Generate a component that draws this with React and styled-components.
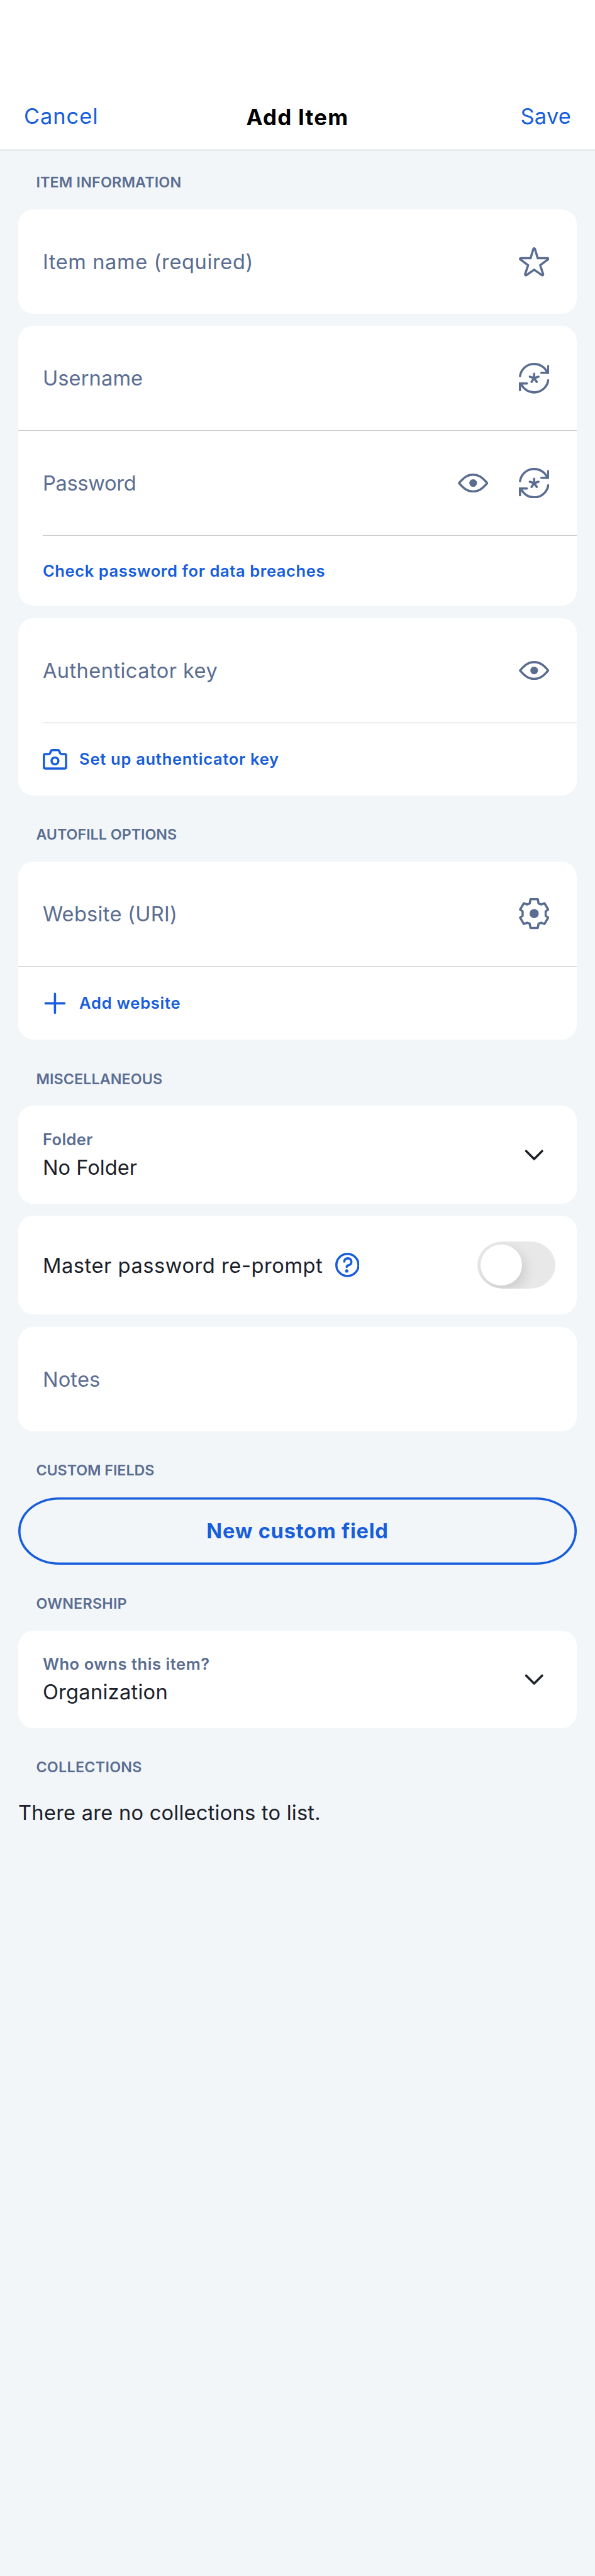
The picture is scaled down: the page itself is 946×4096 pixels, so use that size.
import React from 'react';
import styled, { createGlobalStyle, css } from 'styled-components';

// Sizes are given in device pixels of a 1170x5064 phone canvas and scaled to the page:
// u for widths, type and icons, v for the heights of stacked blocks.
const u = (n) => `${(n * 946) / 1170}px`;
const v = (n) => `${(n * 4096) / 5064}px`;

const color = {
  page: '#f2f6f9',
  card: '#ffffff',
  text: '#1b2029',
  muted: '#5a6d91',
  link: '#175ddc',
  divider: '#cdcdcf',
  bar: '#b1b3b6',
  track: '#e8e8e8',
};

const GlobalStyle = createGlobalStyle`
  html, body { margin: 0; padding: 0; background: ${color.page}; }
  *, *::before, *::after { box-sizing: border-box; }
  button { font: inherit; color: inherit; background: none; border: 0; padding: 0; margin: 0; }
`;

const Screen = styled.div`
  width: 946px;
  height: 4096px;
  overflow: hidden;
  background: ${color.page};
  font-family: Inter, 'Liberation Sans', sans-serif;
  color: ${color.text};
`;

const Header = styled.header`
  height: ${v(295)};
  padding: ${v(165)} ${u(47)} 0;
  background: ${color.card};
  border-bottom: 1px solid ${color.bar};
`;

const HeaderRow = styled.div`
  height: ${v(129)};
  display: grid;
  grid-template-columns: 1fr auto 1fr;
  align-items: center;
`;

const HeaderAction = styled.button`
  justify-self: ${(p) => (p.$end ? 'end' : 'start')};
  padding-bottom: ${u(2)};
  font-size: 34.4px;
  line-height: 44px;
  letter-spacing: ${(p) => p.$track || 0}px;
  color: ${color.link};
`;

const Title = styled.h1`
  margin: 0;
  font-size: 34.9px;
  line-height: 44px;
  font-weight: 700;
  letter-spacing: 1.25px;
  color: #000;
`;

const Form = styled.main`
  padding: 0 ${u(36)};
`;

const SectionTitle = styled.h2`
  margin: 0;
  height: ${(p) => (p.$first ? v(117) : v(130))};
  padding: 0 ${u(35)} ${v(38)};
  display: flex;
  align-items: flex-end;
  font-size: 23.3px;
  line-height: ${u(31)};
  font-weight: 600;
  letter-spacing: ${(p) => p.$track || 0}px;
  color: ${color.muted};
`;

const Stack = styled.div`
  display: flex;
  flex-direction: column;
  gap: ${v(24)};
`;

const Card = styled.section`
  height: ${(p) => v(p.$h)};
  display: flex;
  flex-direction: column;
  overflow: hidden;
  border-radius: ${u(30)};
  background: ${color.card};
`;

const Row = styled.div`
  flex: ${(p) => (p.$fill ? '1 1 0' : `0 0 ${v(205)}`)};
  display: flex;
  align-items: center;
  padding: 0 ${(p) => u(p.$right || 54)} 0 ${u(48)};
`;

const Divider = styled.div`
  flex: 0 0 1px;
  margin-left: ${(p) => (p.$inset ? u(48) : 0)};
  background: ${color.divider};
`;

const bodyText = css`
  font-size: 32.6px;
  line-height: 44px;
  font-weight: 400;
  letter-spacing: ${(p) => p.$track || 0}px;
`;

const Placeholder = styled.span`
  ${bodyText}
  flex: 1;
  color: ${color.muted};
`;

const Value = styled.span`
  ${bodyText}
`;

const Label = styled.span`
  font-size: 25.5px;
  line-height: 44px;
  font-weight: 600;
  letter-spacing: ${(p) => p.$track || 0}px;
  color: ${color.muted};
`;

const Field = styled.div`
  flex: 1;
  display: flex;
  flex-direction: column;
  padding-bottom: ${u(6)};
`;

const LinkButton = styled.button`
  display: flex;
  align-items: center;
  gap: ${u(24)};
  font-size: 25.5px;
  line-height: 44px;
  font-weight: 600;
  letter-spacing: ${(p) => p.$track || 0}px;
  color: ${color.link};
`;

const Actions = styled.div`
  display: flex;
  align-items: center;
  gap: ${u(60)};
  color: ${color.muted};
`;

const PromptLabel = styled.div`
  flex: 1;
  display: flex;
  align-items: center;
  gap: ${u(24)};
`;

const Switch = styled.div`
  width: ${u(153)};
  height: ${u(93)};
  padding: ${u(6)};
  display: flex;
  overflow: hidden;
  border-radius: ${u(50)} / ${u(46.5)};
  background: ${color.track};
`;

const Thumb = styled.div`
  width: ${u(81)};
  height: ${u(81)};
  border-radius: 50%;
  background: #fff;
  box-shadow: ${u(6)} ${u(9)} ${u(24)} rgba(0, 0, 0, 0.13);
`;

const OutlineButton = styled.button`
  width: 100%;
  height: ${v(131.5)};
  display: flex;
  align-items: center;
  justify-content: center;
  border-radius: ${u(80)} / ${u(65.75)};
  box-shadow: inset 0 0 0 3.6px ${color.link};
  font-size: 32.6px;
  line-height: 44px;
  font-weight: 700;
  letter-spacing: 0.79px;
  color: ${color.link};
`;

const EmptyNote = styled.p`
  ${bodyText}
  margin: 0;
  padding-top: ${v(8.5)};
`;

const Drawing = styled.svg`
  display: block;
  flex: none;
  width: ${(p) => u(p.$w)};
  height: ${(p) => u(p.$h)};
  fill: none;
  stroke: currentColor;
  stroke-width: 4.4;
  stroke-linecap: round;
  stroke-linejoin: ${(p) => p.$join || 'round'};
`;

const HelpDrawing = styled(Drawing)`
  color: ${color.link};
`;

const StarIcon = () => (
  <Drawing $w={60} $h={58} $join="miter" viewBox="0 0 60 58">
    <path d="M28.4 3.6Q30 .9 31.6 3.6L37 21.7H56Q59.4 22.2 56.9 24.3L42 35.5L47.6 53Q47.9 56.2 45.2 55L30 44.4L14.8 55Q12.1 56.2 12.4 53L18 35.5L3.1 24.3Q.6 22.2 4 21.7H23Z" />
  </Drawing>
);

const GenerateIcon = () => (
  <Drawing $w={60} $h={60} $join="miter" viewBox="0 0 60 60">
    <path d="M2.3 26A28 28 0 0 1 56 19.6" />
    <path d="M57.8 6.2V19.6H44.2" />
    <path d="M57.7 34A28 28 0 0 1 4 40.4" />
    <path d="M2.2 53.8V40.4H15.8" />
    <path d="M30 21.3V29.8M21.5 27.3L30 29.8L38.5 27.3M24.9 37.4L30 29.8L35.1 37.4" />
  </Drawing>
);

const EyeIcon = () => (
  <Drawing $w={60} $h={37.4} viewBox="0 0 60 37.4">
    <path d="M2.3 18.7C12.5 6.6 20 2.2 30 2.2S47.5 6.6 57.7 18.7C47.5 30.8 40 35.2 30 35.2S12.5 30.8 2.3 18.7Z" />
    <circle cx="30" cy="18.7" r="7.6" fill="currentColor" stroke="none" />
  </Drawing>
);

const CameraIcon = () => (
  <Drawing $w={48} $h={40.5} viewBox="0 0 48 40.5">
    <path d="M5 9.8H12Q14 9.8 14.6 8L15.8 4.2Q16.5 2.2 18.6 2.2H29.8Q31.9 2.2 32.6 4.2L33.9 8Q34.6 9.8 36.6 9.8H43Q45.8 9.8 45.8 12.6V35.5Q45.8 38.3 43 38.3H5Q2.2 38.3 2.2 35.5V12.6Q2.2 9.8 5 9.8Z" />
    <circle cx="24" cy="23.3" r="6.7" />
  </Drawing>
);

const GearIcon = () => (
  <Drawing $w={60} $h={61} viewBox="0 0 60 61">
    <path d="M22.8 2.2H37.2L38.7 10.6L43.8 12.5L50.3 10.2L57.6 22.4L52.7 26.2V34.8L57.6 38.6L50.3 50.8L43.8 48.5L38.7 50.4L37.2 58.8H22.8L21.3 50.4L16.2 48.5L9.7 50.8L2.4 38.6L7.3 34.8V26.2L2.4 22.4L9.7 10.2L16.2 12.5L21.3 10.6Z" />
    <circle cx="30" cy="30.5" r="9" fill="currentColor" stroke="none" />
  </Drawing>
);

const PlusIcon = () => (
  <Drawing $w={48} $h={48} viewBox="0 0 48 48">
    <path d="M24 5.4V42.6M5.4 24H42.6" />
  </Drawing>
);

const ChevronIcon = () => (
  <Drawing $w={60} $h={60} viewBox="0 0 60 60">
    <path stroke={color.text} d="M14.3 22.5L30 38.3L45.7 22.5" />
  </Drawing>
);

const HelpIcon = () => (
  <HelpDrawing $w={48} $h={48} viewBox="0 0 48 48">
    <circle cx="24" cy="24" r="21.8" />
    <path d="M17.8 17.2C18.3 13 21 11 24.6 11C29 11 31.8 13.7 31.8 17.7C31.8 22.5 28.5 24.2 25.5 24.8Q22.6 25.4 22.6 27.8" />
    <circle cx="22.6" cy="35.8" r="3.2" fill="currentColor" stroke="none" />
  </HelpDrawing>
);

export default function App() {
  return (
    <Screen>
      <GlobalStyle />
      <Header>
        <HeaderRow>
          <HeaderAction $track={0.95}>Cancel</HeaderAction>
          <Title>Add Item</Title>
          <HeaderAction $end $track={0.2}>Save</HeaderAction>
        </HeaderRow>
      </Header>

      <Form>
        <SectionTitle $first $track={0.18}>ITEM INFORMATION</SectionTitle>
        <Stack>
          <Card $h={205}>
            <Row>
              <Placeholder $track={0.62}>Item name (required)</Placeholder>
              <Actions><StarIcon /></Actions>
            </Row>
          </Card>
          <Card $h={550}>
            <Row>
              <Placeholder $track={0.13}>Username</Placeholder>
              <Actions><GenerateIcon /></Actions>
            </Row>
            <Divider />
            <Row>
              <Placeholder $track={-0.28}>Password</Placeholder>
              <Actions><EyeIcon /><GenerateIcon /></Actions>
            </Row>
            <Divider $inset />
            <Row $fill>
              <LinkButton $track={0.61}>Check password for data breaches</LinkButton>
            </Row>
          </Card>
          <Card $h={349}>
            <Row>
              <Placeholder $track={0.44}>Authenticator key</Placeholder>
              <Actions><EyeIcon /></Actions>
            </Row>
            <Divider $inset />
            <Row $fill>
              <LinkButton $track={0.72}><CameraIcon />Set up authenticator key</LinkButton>
            </Row>
          </Card>
        </Stack>

        <SectionTitle $track={-0.02}>AUTOFILL OPTIONS</SectionTitle>
        <Card $h={350}>
          <Row>
            <Placeholder $track={0.28}>Website (URI)</Placeholder>
            <Actions><GearIcon /></Actions>
          </Row>
          <Divider />
          <Row $fill>
            <LinkButton $track={0.76}><PlusIcon />Add website</LinkButton>
          </Row>
        </Card>

        <SectionTitle $track={0.09}>MISCELLANEOUS</SectionTitle>
        <Stack>
          <Card $h={192}>
            <Row $fill>
              <Field>
                <Label $track={0.4}>Folder</Label>
                <Value $track={0.05}>No Folder</Value>
              </Field>
              <ChevronIcon />
            </Row>
          </Card>
          <Card $h={194.5}>
            <Row $fill $right={42}>
              <PromptLabel>
                <Value $track={0.57}>Master password re-prompt</Value>
                <HelpIcon />
              </PromptLabel>
              <Switch role="switch" aria-checked="false"><Thumb /></Switch>
            </Row>
          </Card>
          <Card $h={205.5}>
            <Row $fill>
              <Placeholder $track={0.2}>Notes</Placeholder>
            </Row>
          </Card>
        </Stack>

        <SectionTitle $track={-0.06}>CUSTOM FIELDS</SectionTitle>
        <OutlineButton>New custom field</OutlineButton>

        <SectionTitle $track={0.24}>OWNERSHIP</SectionTitle>
        <Card $h={192}>
          <Row $fill>
            <Field>
              <Label $track={0.55}>Who owns this item?</Label>
              <Value $track={0.28}>Organization</Value>
            </Field>
            <ChevronIcon />
          </Row>
        </Card>

        <SectionTitle $track={0.28}>COLLECTIONS</SectionTitle>
        <EmptyNote $track={0.25}>There are no collections to list.</EmptyNote>
      </Form>
    </Screen>
  );
}
